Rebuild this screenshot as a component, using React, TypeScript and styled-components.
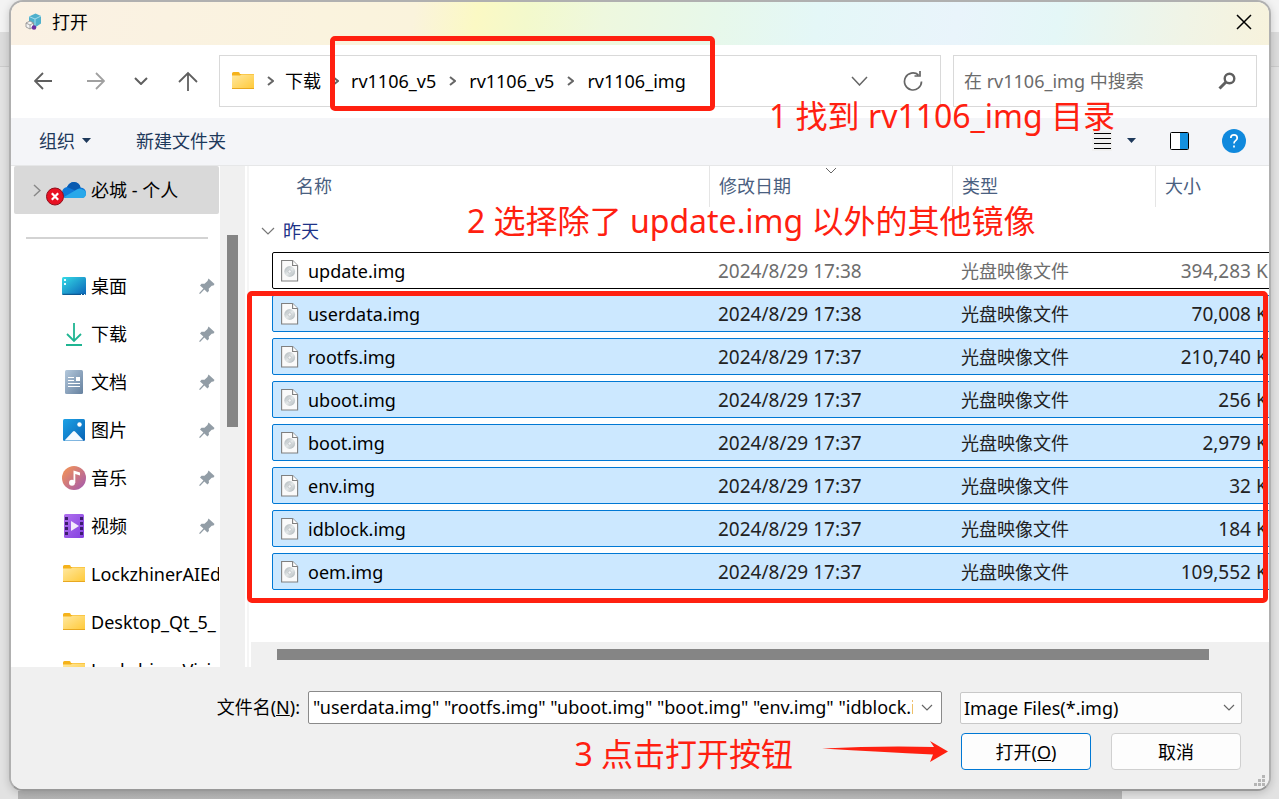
import React, { useState } from "react";
import styled, { createGlobalStyle, css } from "styled-components";

const RED = "#ff2010";
const FONT = '"Noto Sans", "Noto Sans CJK SC", sans-serif';

const GlobalStyle = createGlobalStyle`
  * { box-sizing: border-box; }
  body { margin: 0; }
  body, button, input, select, table { font: 18px/24px ${FONT}; color: #000; }
  button { border: 0; padding: 0; background: none; }
  svg { display: block; flex: none; }
`;

const Desktop = styled.div`
  height: 100vh;
  min-height: 640px;
  padding: 0 8px 8px 9px;
  overflow: hidden;
  background:
    linear-gradient(90deg, #b4b4b4, #bcbcbc 60%, #b4b4b4) 18px 100% / calc(100% - 175px) 8px no-repeat,
    linear-gradient(#f3f3f3 32px, #dcdcdc 32px, #dcdcdc 66px, #cccccc 66px, #cccccc 67px, #e2e2e2 67px);
`;

const Dialog = styled.main`
  height: 100%;
  display: flex;
  flex-direction: column;
  overflow: hidden;
  border: 2px solid #b0b0b0;
  border-bottom-color: #989898;
  border-radius: 14px;
  background: #fff;
  box-shadow: 0 2px 8px rgba(0, 0, 0, 0.18);
`;

const TitleBar = styled.header`
  flex: none;
  height: 43px;
  padding: 0 17px 3px 14px;
  display: flex;
  align-items: center;
  gap: 9px;
  background: linear-gradient(100deg, #faf1e4 0%, #faf3de 25%, #faf3dc 32%, #fbf9c4 37%, #f3f9cc 41%, #eef8de 47%, #e7f8ea 56%, #e4f7f7 64%, #e9f4fb 75%, #e4f7f7 83%, #f0f4e6 93%, #f7f2dc 100%);
`;

const Title = styled.h1`
  flex: 1;
  margin: 0;
  font-size: 18px;
  font-weight: 400;
`;

const NavBar = styled.nav`
  position: relative;
  z-index: 1;
  flex: none;
  height: 73px;
  padding: 10px 12px 11px 0;
  display: flex;
  align-items: stretch;
`;

const NavButton = styled.button<{ $w: number }>`
  width: ${(p) => p.$w}px;
  display: flex;
  align-items: center;
  justify-content: center;
`;

const AddressBar = styled.div`
  flex: 1;
  min-width: 0;
  margin: 0 12px 0 8px;
  padding-left: 11px;
  display: flex;
  align-items: center;
  gap: 9px;
  border: 1px solid #d9d9d9;
`;

const Crumbs = styled.div<{ $gap: number }>`
  position: relative;
  display: flex;
  align-items: center;
  gap: ${(p) => p.$gap}px;
  margin-left: 3px;
`;

const Crumb = styled.a`
  color: #000;
  text-decoration: none;
  white-space: nowrap;
`;

const Spring = styled.span`
  flex: 1;
`;

const SearchBox = styled.label`
  width: 304px;
  padding: 0 20px 0 10px;
  display: flex;
  align-items: center;
  border: 1px solid #d9d9d9;
`;

const SearchInput = styled.input`
  flex: 1;
  min-width: 0;
  padding: 0;
  border: 0;
  outline: 0;
  background: none;
  &::placeholder { color: #6b6b6b; opacity: 1; }
`;

const Note = styled.p`
  margin: 0;
  color: ${RED};
  font-size: 32px;
  line-height: 40px;
  white-space: nowrap;
  pointer-events: none;
`;

const PathNote = styled(Note)`
  position: absolute;
  top: 51px;
  right: 154px;
`;

const Outline = styled.div`
  position: absolute;
  border: 5px solid ${RED};
  border-radius: 5px;
  pointer-events: none;
`;

const PathOutline = styled(Outline)`
  inset: -33px -29px -18px -21px;
`;

const ToolBar = styled.div`
  flex: none;
  height: 48px;
  padding: 0 23px 2px 28px;
  display: flex;
  align-items: center;
  border-bottom: 1px solid #e6e7e8;
  background: #f4f5f8;
`;

const ToolButton = styled.button<{ $gap?: number }>`
  display: flex;
  align-items: center;
  gap: 7px;
  margin-left: ${(p) => p.$gap ?? 0}px;
  color: #1e395b;
`;

const Browser = styled.div`
  flex: 1;
  min-height: 0;
  display: flex;
`;

const SideBar = styled.aside`
  width: 209px;
  flex: none;
  overflow: hidden;
`;

const SideItem = styled.a<{ $selected?: boolean }>`
  height: 48px;
  margin: 0 1px 0 3px;
  padding: 0 4px 0 48px;
  display: flex;
  align-items: center;
  gap: 5px;
  color: #000;
  text-decoration: none;
  white-space: nowrap;
  ${(p) =>
    p.$selected &&
    css`
      padding-left: 19px;
      border-radius: 2px;
      background: #d9d9d9;
    `}
`;

const SideLabel = styled.span`
  flex: 1;
  min-width: 0;
  overflow: hidden;
`;

const WideSideLabel = styled(SideLabel)`
  margin-right: -4px;
`;

const SideDivider = styled.hr`
  height: 2px;
  margin: 23px 12px 23px 15px;
  border: 0;
  background: #d3d3d3;
`;

const SideTrack = styled.div`
  width: 25px;
  flex: none;
  padding: 69px 7px 0;
  background: #f0f0f0;
`;

const SideThumb = styled.div`
  height: 192px;
  background: #858585;
`;

const ListPane = styled.section`
  position: relative;
  flex: 1;
  min-width: 0;
  margin-left: 2px;
  display: flex;
  flex-direction: column;
  border-left: 2px solid #f5f5f5;
`;

const ListClip = styled.div`
  flex: 1;
  min-height: 0;
  overflow: hidden;
`;

const columns = css`
  display: grid;
  grid-template-columns: minmax(0, 1fr) 243px 203px 126px;
`;

const FileTable = styled.table`
  display: block;
  width: calc(100% + 12px);
  padding-left: 23px;
  thead, tbody { display: block; }
  th, td { padding: 0; font-weight: 400; text-align: left; white-space: nowrap; }
`;

const HeadRow = styled.tr`
  ${columns}
  height: 41px;
  color: #4a6080;
`;

const HeadCell = styled.th`
  position: relative;
  && { padding: 8px 0 0 9px; }
  border-left: 1px solid #e5e5e5;
  &:first-child { padding-left: 24px; border-left: 0; }
`;

const SortMark = styled.span`
  position: absolute;
  top: 1px;
  left: 50%;
  transform: translateX(-50%);
`;

const GroupRow = styled.tr`
  display: block;
  height: 45px;
`;

const GroupCell = styled.th`
  height: 45px;
  margin-left: -11px;
  && { padding-top: 2px; }
  display: flex;
  align-items: center;
  gap: 8px;
  color: #1e3287;
`;

const FileRow = styled.tr<{ $selected: boolean }>`
  ${columns}
  height: 37px;
  margin-bottom: 6px;
  align-items: center;
  border: 1px solid ${(p) => (p.$selected ? "#0078d4" : "#000")};
  border-radius: 2px;
  background: ${(p) => (p.$selected ? "#cce8ff" : "#fff")};
  color: ${(p) => (p.$selected ? "#222" : "#6d6d6d")};
`;

const NameCell = styled.td`
  display: flex;
  align-items: center;
  gap: 9px;
  && { padding-left: 8px; }
  color: #000;
`;

const Cell = styled.td`
  && { padding-left: 10px; }
`;

const DateCell = styled(Cell)`
  font-size: 19px;
`;

const SizeCell = styled.td`
  font-size: 19px;
  && { text-align: right; }
`;

const ListTrack = styled.div`
  height: 25px;
  flex: none;
  margin-left: 2px;
  padding: 7px 60px 7px 26px;
  background: #f0f0f0;
`;

const ListThumb = styled.div`
  height: 11px;
  background: #858585;
`;

const SelectNote = styled(Note)`
  position: absolute;
  top: 35px;
  left: 218px;
`;

const SelectOutline = styled(Outline)`
  top: 125px;
  left: -2px;
  right: 1px;
  height: 312px;
`;

const Footer = styled.footer`
  position: relative;
  flex: none;
  height: 122px;
  padding: 24px 27px 0 20px;
  background: #f0f0f0;
`;

const FooterRow = styled.div`
  display: flex;
  justify-content: flex-end;
  align-items: center;
`;

const NameLabel = styled.label`
  width: 277px;
  padding: 0 8px 2px 0;
  text-align: right;
`;

const ComboBox = styled.div`
  flex: 1;
  min-width: 0;
  height: 33px;
  display: flex;
  border: 1px solid #8a8a8a;
  border-radius: 2px;
  background: #fff;
`;

const ComboInput = styled.input`
  flex: 1;
  min-width: 0;
  margin-left: 4px;
  padding: 0 0 2px;
  border: 0;
  outline: 0;
  background: none;
`;

const ComboButton = styled.button`
  width: 28px;
  display: flex;
  align-items: center;
  justify-content: center;
`;

const TypeBox = styled.div`
  position: relative;
  width: 282px;
  margin-left: 18px;
`;

const TypeSelect = styled.select`
  display: block;
  width: 100%;
  height: 32px;
  padding: 0 30px 0 3px;
  appearance: none;
  border: 1px solid #c8c8c8;
  border-radius: 2px;
  background: #fdfdfd;
`;

const TypeMark = styled.span`
  position: absolute;
  top: 12px;
  right: 7px;
  pointer-events: none;
`;

const ActionRow = styled(FooterRow)`
  height: 37px;
  margin-top: 9px;
  padding-right: 1px;
`;

const ActionNote = styled(Note)`
  padding-top: 4px;
`;

const ActionButton = styled.button<{ $primary?: boolean }>`
  width: 130px;
  height: 37px;
  margin-left: ${(p) => (p.$primary ? 13 : 20)}px;
  border: 1px solid ${(p) => (p.$primary ? "#0078d4" : "#d0d0d0")};
  border-radius: 4px;
  background: #fdfdfd;
`;

const StepArrow = styled.svg`
  margin-left: 29px;
`;

const Grip = styled.span`
  position: absolute;
  right: 3px;
  bottom: 2px;
`;

function Chevron({ w, h, stroke = "#666", sw = 1.5, right = false }: { w: number; h: number; stroke?: string; sw?: number; right?: boolean }) {
  const d = right ? `M1 1 L${w - 1} ${h / 2} L1 ${h - 1}` : `M1 1 L${w / 2} ${h - 1} L${w - 1} 1`;
  return (
    <svg width={w} height={h} fill="none" stroke={stroke} strokeWidth={sw}>
      <path d={d} />
    </svg>
  );
}

const CrumbMark = () => <Chevron w={7} h={10} stroke="#666" sw={2} right />;

const Caret = () => (
  <svg width="9" height="5" fill="#1e395b">
    <path d="M0 0h9L4.500 5z" />
  </svg>
);

const FolderIcon = () => (
  <svg width="24" height="24" viewBox="0 0 24 24">
    <defs>
      <linearGradient id="folder" x1="0" y1="0" x2="1" y2="1">
        <stop offset="0" stopColor="#ffe8a0" />
        <stop offset="1" stopColor="#ffc937" />
      </linearGradient>
    </defs>
    <path d="M1 4.500q0-1.500 1.500-1.500h5q1 0 1.500 2h14v4H1z" fill="#f5b21a" />
    <path d="M1 6.500h8l1.500-1H23V20H1z" fill="url(#folder)" />
    <path d="M1 19.500h22" stroke="#e8a820" />
  </svg>
);

const DesktopIcon = () => (
  <svg width="24" height="24">
    <defs>
      <linearGradient id="desk" x1="0" y1="0" x2="1" y2="1">
        <stop offset="0" stopColor="#35dbe6" />
        <stop offset="1" stopColor="#0a63b8" />
      </linearGradient>
    </defs>
    <rect y="3" width="24" height="18" rx="1.500" fill="url(#desk)" />
    <path d="M0.500 20.300h23" stroke="#0d4f86" />
    <path d="M2 5h2v2H2zM2 9h2v2H2zM19 20h1v1h-1zM22 20h1v1h-1z" fill="#e6fbff" />
  </svg>
);

const DownloadIcon = () => (
  <svg width="24" height="24" fill="none" stroke="#1fb592" strokeWidth="1.800">
    <path d="M12 1v18M5 12l7 7 7-7M4 23h16" />
  </svg>
);

const DocumentIcon = () => (
  <svg width="24" height="24">
    <defs>
      <linearGradient id="doc" x1="0" y1="0" x2="1" y2="1">
        <stop offset="0" stopColor="#b3c8dc" />
        <stop offset="1" stopColor="#66819f" />
      </linearGradient>
    </defs>
    <rect x="3" width="18" height="24" rx="1.500" fill="url(#doc)" />
    <path d="M6 7.500h6M6 10.500h6M6 13.500h12M6 16.500h12" stroke="#fff" strokeWidth="1.200" />
    <path d="M14 7h4v4h-4z" fill="#fff" />
  </svg>
);

const PictureIcon = () => (
  <svg width="24" height="24">
    <defs>
      <linearGradient id="pic" x1="0" y1="0" x2="1" y2="1">
        <stop offset="0" stopColor="#1da2e6" />
        <stop offset="1" stopColor="#0863b5" />
      </linearGradient>
    </defs>
    <rect x="1" y="1" width="22" height="22" rx="1.500" fill="url(#pic)" />
    <path d="M2.500 22.500l8.500-9q1-1 2 0l8.500 9z" fill="#f4faff" />
    <circle cx="17.500" cy="6.500" r="2.200" fill="#fff" />
  </svg>
);

const MusicIcon = () => (
  <svg width="24" height="24">
    <defs>
      <linearGradient id="mus" x1="0" y1="0" x2="1" y2="1">
        <stop offset="0.100" stopColor="#f0915a" />
        <stop offset="0.900" stopColor="#a95da8" />
      </linearGradient>
    </defs>
    <circle cx="12" cy="12" r="12" fill="url(#mus)" />
    <circle cx="10" cy="16.700" r="3" fill="#fff" />
    <path d="M11.500 17V4.500l6.500 2v3l-4.700-1.500v9z" fill="#fff" />
  </svg>
);

const VideoIcon = () => (
  <svg width="24" height="24">
    <defs>
      <linearGradient id="vid" x1="0" y1="0" x2="1" y2="1">
        <stop offset="0" stopColor="#b070ee" />
        <stop offset="1" stopColor="#8440e0" />
      </linearGradient>
    </defs>
    <rect x="2" width="20" height="24" rx="1.500" fill="url(#vid)" />
    <path d="M4.500 3v20M19.500 3v20" stroke="#3c1d6e" strokeWidth="3" strokeDasharray="3 2" />
    <path d="M9 7v10l8-5z" fill="#f2eafc" />
  </svg>
);

const CloudIcon = () => (
  <svg width="40" height="32" viewBox="0 -4 40 32">
    <path d="M16 15q0-5 5-6Q24 3.500 29 4.200q4.500.8 5.500 5.300 5 .5 5.500 5 0 5.500-5 5.500H20q-4 0-4-5z" fill="#0f78d8" />
    <path d="M21 9Q24 3.800 28.500 4.100q5 .6 6 5.400l-5.500 3z" fill="#0a5bb0" />
    <path d="M18 19l12-7q3-2 6-.800 4 1.300 4 4.300 0 4.500-4.500 4.500H20z" fill="#28a8ea" />
    <circle cx="9" cy="18.500" r="8.500" fill="#e81123" stroke="#8e0f1c" />
    <path d="M5.800 15.300l6.400 6.400M12.200 15.300l-6.400 6.400" stroke="#fff" strokeWidth="2.200" />
  </svg>
);

const PinIcon = () => (
  <svg width="16" height="16" viewBox="0 0 16 16" fill="#929da6">
    <path d="M9.500 0.500l6 5.500-1 1.500-1.800 0.200-3 3 0.300 2-1.500 1.800-3.200-3-4 4.200-1 0.300 0.200-1.200 3.900-4.200L1 7.500l1.500-1.700 3 0 3-2.800z" />
  </svg>
);

const DiscFileIcon = () => (
  <svg width="18" height="24" viewBox="0 0 18 24">
    <defs>
      <linearGradient id="disc" x1="0" y1="0" x2="1" y2="1">
        <stop offset="0" stopColor="#a9b1b5" />
        <stop offset="0.500" stopColor="#e3e7e8" />
        <stop offset="1" stopColor="#a9b1b5" />
      </linearGradient>
    </defs>
    <path d="M0.600 1.500h11l5 5v15.500h-16z" fill="#fafafa" stroke="#808080" strokeWidth="1.100" />
    <path d="M11.600 1.500v5h5" fill="#fff" stroke="#808080" strokeWidth="1.100" />
    <circle cx="8.700" cy="12.500" r="5.400" fill="url(#disc)" />
    <circle cx="8.700" cy="12.500" r="1.700" fill="#f2f4f5" stroke="#b0b6ba" strokeWidth="0.600" />
  </svg>
);

const AppIcon = () => (
  <svg width="18" height="18" viewBox="0 0 18 18">
    <path d="M4 3.500L10.500 0.500 16 3v7.500l-6 4L4 11z" fill="#4fb0cc" />
    <path d="M4 3.500l6 2.500 6-3M10 6v8.500" stroke="#a5dcec" fill="none" />
    <path d="M1 10l4-2 3.500 2v4L5 16l-4-2z" fill="#f4f4f4" stroke="#8d8d8d" strokeWidth="0.800" />
    <path d="M1 10l4 2 3.500-2M5 12v4" stroke="#8d8d8d" strokeWidth="0.800" fill="none" />
    <circle cx="9" cy="14.500" r="2.300" fill="#6b2fa3" />
  </svg>
);

const places = [
  { label: "桌面", icon: <DesktopIcon /> },
  { label: "下载", icon: <DownloadIcon /> },
  { label: "文档", icon: <DocumentIcon /> },
  { label: "图片", icon: <PictureIcon /> },
  { label: "音乐", icon: <MusicIcon /> },
  { label: "视频", icon: <VideoIcon /> },
];

const folders = ["LockzhinerAIEd", "Desktop_Qt_5_", "LockzhinerVisi"];

const files = [
  ["update.img", "2024/8/29 17:38", "394,283 KB"],
  ["userdata.img", "2024/8/29 17:38", "70,008 KB"],
  ["rootfs.img", "2024/8/29 17:37", "210,740 KB"],
  ["uboot.img", "2024/8/29 17:37", "256 KB"],
  ["boot.img", "2024/8/29 17:37", "2,979 KB"],
  ["env.img", "2024/8/29 17:37", "32 KB"],
  ["idblock.img", "2024/8/29 17:37", "184 KB"],
  ["oem.img", "2024/8/29 17:37", "109,552 KB"],
];

const selectedNames = files
  .slice(1)
  .map(([name]) => `"${name}"`)
  .join(" ");

export default function App() {
  const [names, setNames] = useState(selectedNames);
  return (
    <Desktop>
      <GlobalStyle />
      <Dialog>
        <TitleBar>
          <AppIcon />
          <Title>打开</Title>
          <button aria-label="关闭">
            <svg width="16" height="16" stroke="#000" strokeWidth="1.500">
              <path d="M1 1l14 14M15 1L1 15" />
            </svg>
          </button>
        </TitleBar>

        <NavBar>
          <NavButton $w={64} aria-label="后退">
            <svg width="18" height="18" fill="none" stroke="#5f5f5f" strokeWidth="1.800">
              <path d="M18 9H1M9 1L1 9l8 8" />
            </svg>
          </NavButton>
          <NavButton $w={42} aria-label="前进">
            <svg width="18" height="18" fill="none" stroke="#a0a0a0" strokeWidth="1.800">
              <path d="M0 9h17M9 1l8 8-8 8" />
            </svg>
          </NavButton>
          <NavButton $w={48} aria-label="最近">
            <Chevron w={14} h={8} stroke="#5f5f5f" sw={2} />
          </NavButton>
          <NavButton $w={46} aria-label="上移">
            <svg width="20" height="20" fill="none" stroke="#5f5f5f" strokeWidth="1.800">
              <path d="M10 20V2M1 11l9-9 9 9" />
            </svg>
          </NavButton>
          <AddressBar>
            <FolderIcon />
            <Crumbs $gap={11}>
              <CrumbMark />
              <Crumb href="#">下载</Crumb>
              <CrumbMark />
            </Crumbs>
            <Crumbs $gap={13}>
              <Crumb href="#">rv1106_v5</Crumb>
              <CrumbMark />
              <Crumb href="#">rv1106_v5</Crumb>
              <CrumbMark />
              <Crumb href="#">rv1106_img</Crumb>
              <PathOutline />
            </Crumbs>
            <Spring />
            <NavButton $w={36} aria-label="历史记录">
              <Chevron w={17} h={10} />
            </NavButton>
            <NavButton $w={54} aria-label="刷新">
              <svg width="20" height="22" fill="none" stroke="#666" strokeWidth="1.700">
                <path d="M18.500 11.500a8.500 8.500 0 1 1-3-6.500M11.500 6h5.500V1" />
              </svg>
            </NavButton>
          </AddressBar>
          <SearchBox>
            <SearchInput aria-label="搜索" placeholder="在 rv1106_img 中搜索" />
            <svg width="18" height="18" fill="none" stroke="#5f5f5f">
              <circle cx="11.500" cy="6.500" r="4.800" strokeWidth="2.400" />
              <path d="M8 10l-6.500 6.500" strokeWidth="3" />
            </svg>
          </SearchBox>
          <PathNote>1 找到 rv1106_img 目录</PathNote>
        </NavBar>

        <ToolBar>
          <ToolButton>
            组织
            <Caret />
          </ToolButton>
          <ToolButton $gap={45}>新建文件夹</ToolButton>
          <Spring />
          <ToolButton aria-label="更改视图">
            <svg width="20" height="20" stroke="#000" strokeWidth="1">
              <rect width="20" height="20" fill="#f0f0f0" stroke="none" />
              <path d="M2 2.500h17M2 7.500h17M2 12.500h17M2 17.500h17" />
            </svg>
          </ToolButton>
          <ToolButton $gap={15} aria-label="更多选项">
            <Caret />
          </ToolButton>
          <ToolButton $gap={33} aria-label="预览窗格">
            <svg width="22" height="20">
              <rect x="1.500" y="1.500" width="18" height="17" rx="1" fill="#fff" stroke="#000" />
              <path d="M11 2h8v16h-8z" fill="#1490df" />
            </svg>
          </ToolButton>
          <ToolButton $gap={31} aria-label="帮助">
            <svg width="24" height="24" fill="none" stroke="#fff" strokeWidth="1.700">
              <circle cx="12" cy="12" r="12" fill="#1089dd" stroke="none" />
              <path d="M8.800 9q0-3.200 3.200-3.200T15.200 9q0 1.500-1.600 2.600T12 14.500M12 16.500v2" />
            </svg>
          </ToolButton>
        </ToolBar>

        <Browser>
          <SideBar>
            <SideItem href="#" $selected>
              <Chevron w={8} h={13} stroke="#888" right />
              <CloudIcon />
              <SideLabel>必城 - 个人</SideLabel>
            </SideItem>
            <SideDivider />
            {places.map((p) => (
              <SideItem href="#" key={p.label}>
                {p.icon}
                <SideLabel>{p.label}</SideLabel>
                <PinIcon />
              </SideItem>
            ))}
            {folders.map((name) => (
              <SideItem href="#" key={name}>
                <FolderIcon />
                <WideSideLabel>{name}</WideSideLabel>
              </SideItem>
            ))}
          </SideBar>
          <SideTrack>
            <SideThumb />
          </SideTrack>

          <ListPane>
            <ListClip>
              <FileTable>
                <thead>
                  <HeadRow>
                    <HeadCell>名称</HeadCell>
                    <HeadCell>
                      修改日期
                      <SortMark>
                        <Chevron w={12} h={7} sw={1} />
                      </SortMark>
                    </HeadCell>
                    <HeadCell>类型</HeadCell>
                    <HeadCell>大小</HeadCell>
                  </HeadRow>
                </thead>
                <tbody>
                  <GroupRow>
                    <GroupCell colSpan={4}>
                      <Chevron w={14} h={8} stroke="#777" sw={1.2} />
                      昨天
                    </GroupCell>
                  </GroupRow>
                  {files.map(([name, date, size], i) => (
                    <FileRow key={name} $selected={i > 0}>
                      <NameCell>
                        <DiscFileIcon />
                        {name}
                      </NameCell>
                      <DateCell>{date}</DateCell>
                      <Cell>光盘映像文件</Cell>
                      <SizeCell>{size}</SizeCell>
                    </FileRow>
                  ))}
                </tbody>
              </FileTable>
            </ListClip>
            <ListTrack>
              <ListThumb />
            </ListTrack>
            <SelectNote>2 选择除了 update.img 以外的其他镜像</SelectNote>
            <SelectOutline />
          </ListPane>
        </Browser>

        <Footer>
          <FooterRow>
            <NameLabel htmlFor="file-name">
              文件名(<u>N</u>):
            </NameLabel>
            <ComboBox>
              <ComboInput id="file-name" value={names} onChange={(e) => setNames(e.target.value)} />
              <ComboButton aria-label="文件名列表">
                <Chevron w={12} h={7} sw={1.2} />
              </ComboButton>
            </ComboBox>
            <TypeBox>
              <TypeSelect aria-label="文件类型">
                <option>Image Files(*.img)</option>
              </TypeSelect>
              <TypeMark>
                <Chevron w={12} h={7} sw={1.2} />
              </TypeMark>
            </TypeBox>
          </FooterRow>
          <ActionRow>
            <ActionNote>3 点击打开按钮</ActionNote>
            <StepArrow width="126" height="24" fill={RED}>
              <path d="M0 8.500Q60 5.500 112 7L108 1l18 10.500L108 22l3-7.500Q60 12 0 8.500z" />
            </StepArrow>
            <ActionButton $primary>
              打开(<u>O</u>)
            </ActionButton>
            <ActionButton>取消</ActionButton>
          </ActionRow>
          <Grip>
            <svg width="12" height="12" fill="#b5b5b5">
              <path d="M8 0h3v3H8zM4 4h3v3H4zM8 4h3v3H8zM0 8h3v3H0zM4 8h3v3H4zM8 8h3v3H8z" />
            </svg>
          </Grip>
        </Footer>
      </Dialog>
    </Desktop>
  );
}
